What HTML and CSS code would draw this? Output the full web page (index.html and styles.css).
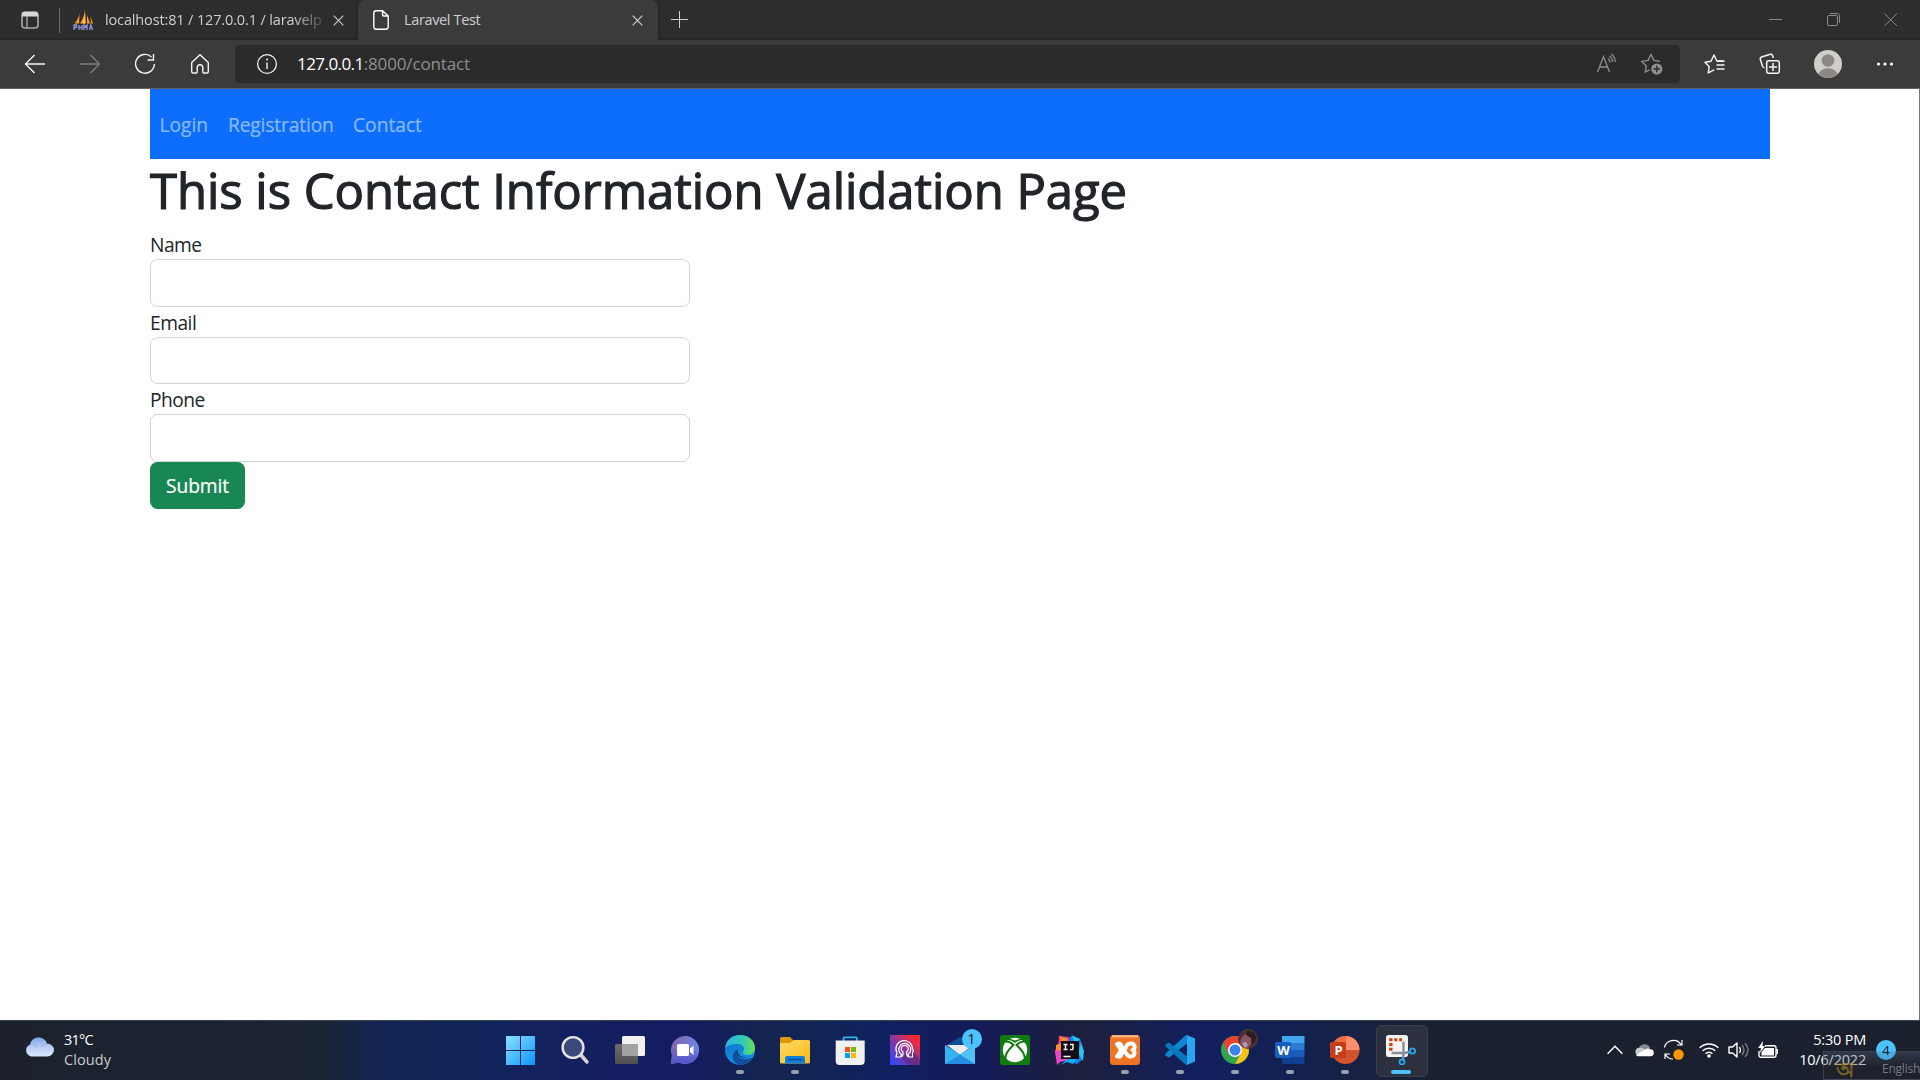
FILE: index.html
```html
<!DOCTYPE html>
<html lang="en">
<head>
<meta charset="utf-8">
<title>Laravel Test</title>
<link rel="stylesheet" href="styles.css">
</head>
<body>
<div class="screen">
  <header class="tabstrip">
    <button class="tab-actions" aria-label="Tab actions"><svg width="18" height="18" viewBox="0 0 18 18"><rect x="1" y="1" width="16" height="16" rx="3" fill="none" stroke="#a9a9a9" stroke-width="1.6"/><path d="M1 5V4a3 3 0 0 1 3-3h10a3 3 0 0 1 3 3v1.500H1z" fill="#d8d8d8"/><path d="M6 5v12" stroke="#a9a9a9" stroke-width="1.4"/></svg></button>
    <span class="divider"></span>
    <div class="tab tab-idle">
      <svg width="21" height="21" viewBox="0 0 21 21"><path d="M1.500 13.500C4 11 6 7 6.500 3l-.3 10.500zM7 13.500C9.500 10 11.500 5 12 0l1 13.500zM14 13.500V5l3 8.500zM17.500 6.500l2.500 7h-2z" fill="#f89c1c"/><path d="M11.500 2l.5 11.500H9.500C11 10 11.500 6 11.500 2z" fill="#ffc46a"/><path d="M1 20v-5h2.500v2.500H1M6 20v-5m0 2.500h3M9 15v5M11 20v-5l1.500 2 1.500-2v5M16.500 20l1.300-5 1.700 5" fill="none" stroke="#8f95cf" stroke-width="1.400"/></svg>
      <span class="tab-title fade">localhost:81 / 127.0.0.1 / laravelp</span>
      <svg class="x" width="11" height="11" viewBox="0 0 11 11"><path d="M.7.7l9.600 9.600M10.300.7L.7 10.300" stroke="#c9c9c9" stroke-width="1.200"/></svg>
    </div>
    <div class="tab tab-active">
      <svg width="16" height="20" viewBox="0 0 16 20"><path d="M3 .8h6.500L15.200 6v11a2.200 2.200 0 0 1-2.200 2.200H3A2.200 2.200 0 0 1 .8 17V3A2.200 2.200 0 0 1 3 .8zM9.500 1v3.500A1.500 1.500 0 0 0 11 6h4" fill="none" stroke="#fff" stroke-width="1.400"/></svg>
      <span class="tab-title">Laravel Test</span>
      <svg class="x" width="11" height="11" viewBox="0 0 11 11"><path d="M.7.7l9.600 9.600M10.300.7L.7 10.300" stroke="#d0d0d0" stroke-width="1.200"/></svg>
    </div>
    <button class="new-tab" aria-label="New tab"><svg width="17" height="17" viewBox="0 0 17 17"><path d="M8.500 0v17M0 8.500h17" stroke="#cfcfcf"/></svg></button>
    <div class="window-controls">
      <svg width="14" height="14" viewBox="0 0 14 14"><path d="M0 6.500h13" stroke="#8b8b8b"/></svg>
      <svg width="14" height="14" viewBox="0 0 14 14"><rect x=".5" y="2.500" width="10" height="10" rx="1.500" fill="none" stroke="#8b8b8b"/><path d="M3 .5h7A2.500 2.500 0 0 1 12.500 3v7" fill="none" stroke="#8b8b8b"/></svg>
      <svg width="14" height="14" viewBox="0 0 14 14"><path d="M.5.5l12.500 12.500M13 .5L.5 13" stroke="#8b8b8b"/></svg>
    </div>
  </header>

  <div class="toolbar">
    <div class="nav-buttons">
      <svg width="22" height="22" viewBox="0 0 22 22"><path d="M21 11H1.500M10.500 2L1.500 11l9 9" fill="none" stroke="#f5f5f5" stroke-width="1.400"/></svg>
      <svg width="22" height="22" viewBox="0 0 22 22"><path d="M1 11h19.500M11.500 2l9 9-9 9" fill="none" stroke="#7d7d7d" stroke-width="1.400"/></svg>
      <svg width="22" height="22" viewBox="0 0 22 22"><path d="M17.500 4A9.400 9.400 0 1 0 20.400 11" fill="none" stroke="#f5f5f5" stroke-width="1.400"/><path d="M19.500 1v6h-6" fill="none" stroke="#f5f5f5" stroke-width="1.400"/></svg>
      <svg width="22" height="22" viewBox="0 0 22 22"><path d="M2.700 9.500L11 1.800l8.300 7.700v9.200a1.300 1.300 0 0 1-1.300 1.300h-3.200a1 1 0 0 1-1-1v-4.500a2.800 2.800 0 0 0-5.600 0V19a1 1 0 0 1-1 1H4a1.300 1.300 0 0 1-1.300-1.300z" fill="none" stroke="#f5f5f5" stroke-width="1.400" stroke-linejoin="round"/></svg>
    </div>
    <div class="address">
      <svg width="22" height="22" viewBox="0 0 22 22"><circle cx="11" cy="11" r="9.400" fill="none" stroke="#f2f2f2" stroke-width="1.300"/><path d="M11 9.500v6.500" stroke="#f2f2f2" stroke-width="1.400"/><circle cx="11" cy="6.500" r="1" fill="#f2f2f2"/></svg>
      <span class="url"><b>127.0.0.1</b><span>:8000/contact</span></span>
      <svg class="read" width="22" height="22" viewBox="0 0 22 22"><path d="M1.500 19L7.500 3.500 13.500 19M3.600 14h7.800M12 5.500q2 1.500 2 4M13.500 3q3 2 3 6M15.300 1q4 3 4 8" fill="none" stroke="#8d8d8d" stroke-width="1.300"/></svg>
      <svg width="24" height="24" viewBox="0 0 24 24"><path d="M20 9.400l-6.100-1L11 2.500 8.100 8.400l-6.300 1 4.500 4.500L5.300 20l4.500-2.300" fill="none" stroke="#8d8d8d" stroke-width="1.400"/><circle cx="16.800" cy="17" r="5.600" fill="#8f8f8f"/><path d="M16.800 13.800v6.400M13.600 17H20" stroke="#2b2b2b" stroke-width="1.400"/></svg>
    </div>
    <div class="toolbar-actions">
      <svg width="24" height="22" viewBox="0 0 24 22"><path d="M20.500 8.300H14L11 2 8 8.300l-6 .9 4.300 4.500-1.100 6.200 6-3" fill="none" stroke="#f5f5f5" stroke-width="1.400" stroke-linejoin="round"/><path d="M13.500 12h8M13.500 16h8M14.500 8h7" stroke="#f5f5f5" stroke-width="1.500"/></svg>
      <svg width="24" height="22" viewBox="0 0 24 22"><rect x="8.700" y="7.700" width="12.600" height="12.600" rx="2" fill="none" stroke="#f5f5f5" stroke-width="1.500"/><path d="M15 10v8M11 14h8M15.300 5l-.8-2.600a1.700 1.700 0 0 0-2.100-1.100L3.500 4a2 2 0 0 0-1.200 2.300l2.200 7a2.500 2.500 0 0 0 2 1.500" fill="none" stroke="#f5f5f5" stroke-width="1.500"/></svg>
      <svg width="28" height="28" viewBox="0 0 28 28"><defs><clipPath id="face"><circle cx="14" cy="14" r="14"/></clipPath></defs><circle cx="14" cy="14" r="14" fill="#d0cecb"/><g clip-path="url(#face)" fill="#8d8884"><circle cx="14" cy="10.500" r="6.300"/><ellipse cx="14" cy="26" rx="10" ry="7.800"/></g></svg>
      <svg width="18" height="6" viewBox="0 0 18 6"><g fill="#fff"><circle cx="2.500" cy="3" r="1.600"/><circle cx="9" cy="3" r="1.600"/><circle cx="15.500" cy="3" r="1.600"/></g></svg>
    </div>
  </div>

  <main class="page">
    <div class="container">
      <nav class="navbar"><a class="n-login">Login</a><a class="n-reg">Registration</a><a class="n-contact">Contact</a></nav>
      <h1>This is Contact Information Validation Page</h1>
      <form>
        <label for="name">Name</label><input id="name" type="text">
        <label for="email">Email</label><input id="email" type="text">
        <label for="phone">Phone</label><input id="phone" type="text">
        <button class="submit" type="button">Submit</button>
      </form>
    </div>
  </main>

  <footer class="taskbar">
    <div class="weather">
      <svg width="32" height="22" viewBox="0 0 32 22"><defs><linearGradient id="cl" x2="0" y2="1"><stop stop-color="#7fa4e8"/><stop offset=".55" stop-color="#bcd0f5"/><stop offset="1" stop-color="#dbe9ff"/></linearGradient></defs><path d="M8 20.500A7 6.500 0 0 1 7 8.500C8 4 11.500 1.500 15.500 1.500S23 4 24 7.500a7 6.500 0 0 1 0 13z" fill="url(#cl)"/><path d="M7 8.500q5-1 7 3M24 7.500q-5 0-6 4" fill="none" stroke="#86a8e6" opacity=".6"/></svg>
      <div class="weather-text"><span class="temp">31°C</span><span class="cond">Cloudy</span></div>
    </div>

    <div class="apps">
      <div class="app"><svg viewBox="0 0 30 30"><defs><linearGradient id="w1" x2="1" y2="1"><stop stop-color="#8be3ff"/><stop offset="1" stop-color="#0a94fb"/></linearGradient></defs><path d="M1 1h14v14H1zM16 1h14v14H16zM1 16h14v14H1zM16 16h14v14H16z" fill="url(#w1)"/></svg></div>
      <div class="app"><svg viewBox="0 0 30 30"><path d="M20 19l7 8" stroke="#d5d5d5" stroke-width="3.500" stroke-linecap="round"/><circle cx="13" cy="12.500" r="10.400" fill="#3c497b" stroke="#e6e6e6" stroke-width="2.400"/></svg></div>
      <div class="app"><svg viewBox="0 0 30 30"><defs><linearGradient id="tv" y2="1" x2="0"><stop stop-color="#6e6e6e"/><stop offset="1" stop-color="#4f4f4f"/></linearGradient></defs><rect x="7" y="1" width="23" height="20" rx="1.500" fill="#f1f1f1"/><rect y="9" width="23" height="20" rx="1.500" fill="url(#tv)"/><path d="M7 9h14.500A1.500 1.500 0 0 1 23 10.500V21H7z" fill="#a3a3a3"/></svg></div>
      <div class="app"><svg viewBox="0 0 30 30"><defs><linearGradient id="ch" x2="1" y2=".3"><stop stop-color="#8860a3"/><stop offset="1" stop-color="#6a86ea"/></linearGradient><linearGradient id="ch2" x2="0" y2="1"><stop offset=".4" stop-color="#5558c8" stop-opacity="0"/><stop offset=".9" stop-color="#5558c8"/></linearGradient></defs><path d="M15 1a14 14 0 1 1-6 26.600L.8 29 2 20.500A14 14 0 0 1 15 1z" fill="url(#ch)"/><path d="M15 1a14 14 0 1 1-6 26.600L.8 29 2 20.500A14 14 0 0 1 15 1z" fill="url(#ch2)"/><rect x="7" y="9" width="12" height="12" rx="1.500" fill="#fff"/><path d="M20 13.500l3.500-3v9.500L20 17z" fill="#fff"/></svg></div>
      <div class="app run"><svg viewBox="0 0 30 30"><defs><linearGradient id="e1"><stop stop-color="#2db5e5"/><stop offset=".6" stop-color="#35c9b5"/><stop offset="1" stop-color="#6be04e"/></linearGradient><linearGradient id="e2" x2=".4" y2="1"><stop stop-color="#0e6fc8"/><stop offset="1" stop-color="#1592e6"/></linearGradient></defs><circle cx="15" cy="15" r="15" fill="url(#e2)"/><path d="M0 13C1 5 7 0 15 0c9 0 15 6 15 13 0 4-3 7-7 7-3 0-5.500-1-5.500-2.200 0-.8 1.500-1.300 1.500-3.800 0-3-3-5-7-5-5 0-9.500 1.500-12 4z" fill="url(#e1)"/><path d="M12.500 15c-2 7 4 12 15 7.500-3 5-7.500 7.500-12 7.500C9 29 7 24 8 19.500c.5-2.500 2.500-4 4.500-4.500z" fill="#11509c"/><path d="M13 14c-1 3 0 6 3 7.500 3 1.200 7 1 10-.5-6 3-12 2-14-2-1-2-.3-4 1-5z" fill="#10295f"/></svg></div>
      <div class="app run"><svg viewBox="0 0 30 30"><defs><linearGradient id="fo" x2="1" y2="1"><stop stop-color="#ffdb6b"/><stop offset="1" stop-color="#fcb813"/></linearGradient></defs><path d="M0 3.500A1.500 1.500 0 0 1 1.500 2H10l3.500 3.500H28A2 2 0 0 1 30 7.500V10H0z" fill="#dc9600"/><path d="M0 8h10l4-3h14.500A1.500 1.500 0 0 1 30 6.500V27a1.500 1.500 0 0 1-1.500 1.500h-27A1.500 1.500 0 0 1 0 27z" fill="url(#fo)"/><path d="M5 28.500V23a2 2 0 0 1 2-2h16a2 2 0 0 1 2 2v5.500z" fill="#1280d8"/><path d="M8 24.500h14" stroke="#0a4d94" stroke-width="1.500"/></svg></div>
      <div class="app"><svg viewBox="0 0 30 30"><path d="M8.500 8V3.500a1.200 1.200 0 0 1 1.200-1.200h11a1.200 1.200 0 0 1 1.200 1.200V8" fill="none" stroke="#31b4ec" stroke-width="1.800"/><path d="M.7 5.500h29V26a4 4 0 0 1-4 4H4.700a4 4 0 0 1-4-4z" fill="#f0f0f0"/><path d="M10 12h5v5h-5z" fill="#f05022"/><path d="M16 12h5v5h-5z" fill="#7db700"/><path d="M10 18h5v5h-5z" fill="#00a3ee"/><path d="M16 18h5v5h-5z" fill="#fdb800"/></svg></div>
      <div class="app"><svg viewBox="0 0 30 30"><defs><linearGradient id="pa" y1="1" x2="1" y2="0"><stop stop-color="#2c48ff"/><stop offset=".5" stop-color="#8a359c"/><stop offset=".85" stop-color="#fb2730"/></linearGradient></defs><path d="M0 0h30v30H0z" fill="url(#pa)"/><path d="M10 22l9 8h11V24l-8-9z" fill="#561d69" opacity=".5"/><path d="M6 22h4.500l1-2.500a6 6 0 1 1 6.500 0l1 2.500h3.500v-4.500l1-1.500-1-2.500A8.300 8.300 0 1 0 7 18z" fill="none" stroke="#fff" stroke-width="1.200"/><path d="M11.500 22c2-1 1.500-4 1.500-5a3.500 3.500 0 1 1 3.500 0c0 1 0 4 2 5" fill="none" stroke="#fff" stroke-width="1.200"/></svg></div>
      <div class="app"><svg viewBox="0 0 30 30"><path d="M0 11L15 2l15 9z" fill="#0f4f98"/><path d="M0 10h30v10H0z" fill="#0f4f98"/><path d="M2 10h26L15 20z" fill="#ececec"/><path d="M0 10l15 9.500L30 10v19H0z" fill="#35b3ee"/><path d="M0 29l30-19v19z" fill="#51c4f3"/><path d="M0 29l15-9.500L30 29z" fill="#258ee0"/></svg><span class="badge">1</span></div>
      <div class="app"><svg viewBox="0 0 30 30"><rect width="30" height="30" rx="2.500" fill="#107c10"/><circle cx="15" cy="15" r="12.200" fill="#fff"/><path d="M6 5.500Q10 4 15 8q5-4 9-2.500L22 3 15 5.500 8 3z" fill="#107c10"/><path d="M5.200 6.700C9 6 12.500 9 13.500 10 9 14 5 19.500 5.300 24M24.800 6.700C21 6 17.500 9 16.500 10c4.500 4 8.500 9.500 8.200 14" fill="none" stroke="#107c10" stroke-width="2"/></svg></div>
      <div class="app"><svg viewBox="0 0 30 30"><path d="M4 1l10 1 1 12L1 22l-1-7 3-3z" fill="#ef3b7e"/><path d="M1 10l5-2v12l-5-1zM4 1l9 3-5 6z" fill="#fa8d2c"/><path d="M14 3l3-2.500L25 4l2 5v16l-5 4-10-3z" fill="#1d78ec"/><path d="M17 .5L25 4l-5 5zM26 8l3 8-1 10-5-8z" fill="#21c7ee"/><path d="M0 16l6-1 8 10-9 2-3 3z" fill="#e947c6"/><path d="M5 30l8-6 10-1-5 6-6-2z" fill="#0dabef"/><path d="M6 6h18v18H6z" fill="#130d16"/><path d="M8.500 9.500h4m-2 0v5m-2 0h4M15 9.500h3v4q0 1.500-3 1M8.500 21.500h7" fill="none" stroke="#fff" stroke-width="1.400"/></svg></div>
      <div class="app run"><svg viewBox="0 0 30 30"><rect width="30" height="30" rx="3.500" fill="#ed7426"/><path d="M2 0h26v2.500H2z" fill="#ffb078"/><path d="M7 9.200q2-1.200 3.500 0l1.500 3.300q1 1.500 3 1.500l2-4q1-1.500 4-1.500c4.500 0 4.500 6 1.500 6.500 3 .8 2.500 6.500-1.500 6.500q-3 0-4-2l-2-3q-2 0-3 1.500L10.500 21Q9 22 7 21.300" fill="none" stroke="#fff" stroke-width="4" stroke-linecap="round" stroke-linejoin="round"/><path d="M8 10l3 5-3 5.500" fill="none" stroke="#fff" stroke-width="4"/></svg></div>
      <div class="app run"><svg viewBox="0 0 30 30"><path d="M22 0l8 3.500v23L22 30z" fill="#2aa5f4"/><path d="M22 0v8.500L4 22.500.3 20.500v-1.800L20.500.5z" fill="#1285d2"/><path d="M22 30v-8.500L4 7.500.3 9.500v1.800L20.500 29.500z" fill="#0878bd"/></svg></div>
      <div class="app run"><svg viewBox="0 0 30 30"><circle cx="15" cy="15" r="14" fill="#34a350"/><path d="M15 15L2.900 8A14 14 0 0 1 27.100 8H15z" fill="#ea4335"/><path d="M15 8h12.100A14 14 0 0 1 15 29l6-10.500z" fill="#fbc116"/><path d="M3 8l6 10.500L15 15z" fill="#ea4335"/><circle cx="15" cy="15" r="7" fill="#fff"/><circle cx="15" cy="15" r="5.500" fill="#3b82ee"/></svg><svg class="profile" viewBox="0 0 20 20"><circle cx="10" cy="10" r="10" fill="#4d3236"/><path d="M2 15q1-8 6-10 5 0 6 4l-1 7-4 3.500Q4 19 2 15z" fill="#8c5460"/><path d="M4 14l4-1 2 3-3 3z" fill="#b79abb"/><path d="M9 2q9-1 9 8l-4 7-1-8-5-3z" fill="#2b1d22"/></svg></div>
      <div class="app run"><svg viewBox="0 0 30 30"><path d="M7 1h22.500v7H7z" fill="#41a5ee"/><path d="M7 8h22.500v7H7z" fill="#2b7cd3"/><path d="M7 15h22.500v7H7z" fill="#185abd"/><path d="M7 22h22.500v7H7z" fill="#103f91"/><rect y="7" width="16" height="16" rx="1.500" fill="#1a5dbe"/></svg><span class="mono">W</span></div>
      <div class="app run"><svg viewBox="0 0 30 30"><circle cx="15.500" cy="15" r="14" fill="#d35230"/><path d="M15.500 1a14 14 0 0 1 14 14h-14z" fill="#ff8f6b"/><path d="M15.500 1v14h-14a14 14 0 0 1 14-14z" fill="#ed6c47"/><rect y="7" width="16" height="16" rx="1.500" fill="#c43e1c"/></svg><span class="mono">P</span></div>
      <div class="app run active"><svg viewBox="0 0 30 30"><rect width="22" height="22" rx="2.500" fill="#f4f4f4"/><path d="M3.200 3.200h3.300v3H3.200zM8.300 3.200h3v3h-3zM13.200 3.200H16v3h-2.800zM3.200 8h3.300v3H3.200zM3.200 12.800h3.300v3H3.200z" fill="#d83b01"/><path d="M5 18h4M17.500 6v5" stroke="#c4c4c4" stroke-width="2"/><path d="M17.500 7v13l-1 3M6 18h13l4-1" fill="none" stroke="#8b9197" stroke-width="2.400"/><circle cx="16" cy="27" r="2.500" fill="none" stroke="#28a8ea" stroke-width="1.800"/><circle cx="26.500" cy="16" r="2.700" fill="none" stroke="#28a8ea" stroke-width="1.800"/><path d="M17 24.500l1-2.500M24 17l-2.500.7" stroke="#28a8ea" stroke-width="2"/></svg></div>
    </div>

    <div class="tray">
      <svg width="16" height="10" viewBox="0 0 16 10"><path d="M.6 8.800L8 1.200l7.400 7.600" fill="none" stroke="#fff" stroke-width="1.400"/></svg>
      <svg class="t-cloud" width="20" height="14" viewBox="0 0 20 14"><path d="M5 5A6 5.500 0 0 1 15.500 3.500l.5 2L9 9z" fill="#858b93"/><path d="M4 12.500A4 4 0 0 1 5 4.800q4-1 8 4z" fill="#c9cbcf"/><path d="M2 12l10-6q2-1 4 .2a3.500 3.500 0 0 1 .5 7H4q-1.500 0-2-1.200z" fill="#fff"/></svg>
      <svg class="t-sync" width="22" height="22" viewBox="0 0 22 22"><path d="M1.500 8.500A9 8.500 0 0 1 18 5.500M19 1v5h-5M2 20v-5h5M2.500 15.500Q5 20 10 20" fill="none" stroke="#fff" stroke-width="1.200"/><circle cx="15.500" cy="15.500" r="5.200" fill="#ff9800"/></svg>
      <svg class="t-wifi" width="20" height="16" viewBox="0 0 20 16"><path d="M.7 5.800a13.200 13.200 0 0 1 18.600 0M3.700 8.800a9 9 0 0 1 12.600 0M6.600 11.700a4.800 4.800 0 0 1 6.800 0" fill="none" stroke="#fff" stroke-width="1.500"/><circle cx="10" cy="14" r="1.800" fill="#fff"/></svg>
      <svg class="t-vol" width="21" height="18" viewBox="0 0 21 18"><path d="M1 6h3.500L9 2v14l-4.500-4H1z" fill="none" stroke="#fff" stroke-width="1.400" stroke-linejoin="round"/><path d="M11.500 6q2 3 0 6" fill="none" stroke="#fff" stroke-width="1.300"/><path d="M14 4q4 5 0 10M17 2q6 7 0 14" fill="none" stroke="#777c85" stroke-width="1.300"/></svg>
      <svg class="t-bat" width="21" height="18" viewBox="0 0 21 18"><path d="M7 4.700h9a2 2 0 0 1 2 2v7.600a2 2 0 0 1-2 2H3a2 2 0 0 1-2-2V10" fill="none" stroke="#fff" stroke-width="1.400"/><path d="M7 7h9v7.500H3.500V11zM18.500 8H20v5h-1.500z" fill="#fff"/><path d="M5 0L0 7h3l-1 5 5-7H4.500z" fill="#fff"/></svg>
      <div class="clock"><span class="time">5:30 PM</span><span class="date">10/6/2022</span></div>
      <span class="count">4</span>
    </div>
    <div class="ime"><span class="ime-logo">অ</span><span class="ime-name">English</span></div>
  </footer>
</div>
</body>
</html>
```

FILE: styles.css
```css
* { box-sizing: border-box; }

body {
  margin: 0;
  font-family: "Open Sans", "Noto Sans", sans-serif;
  background: #fff;
}

.screen {
  width: 1920px;
  height: 1080px;
  display: flex;
  flex-direction: column;
  overflow: hidden;
}

svg { display: block; flex: none; }
button { border: 0; padding: 0; background: none; font: inherit; }

/* Browser tab strip */
.tabstrip {
  height: 40px;
  flex: none;
  display: flex;
  background: #2d2d2d;
  box-shadow: inset 0 -2px 2px -1px #222;
  color: #cfcfcf;
  font-size: 14.500px;
}
.tab-actions { width: 39px; padding-left: 21px; }
.divider { width: 1px; height: 25px; margin: 8px 13px 0 20px; background: #6b6b6b; }
.tab { display: flex; align-items: center; }
.tab-idle { width: 285px; }
.tab-title { white-space: nowrap; line-height: 20px; letter-spacing: -.36px; }
.tab-idle .tab-title { width: 217px; margin: 0 11px; letter-spacing: -.14px; }
.fade { -webkit-mask-image: linear-gradient(90deg, #000 188px, transparent 224px); }
.tab-active {
  width: 300px;
  padding: 0 15px 0 15px;
  background: #3b3b3b;
  border-radius: 6px 6px 0 0;
  box-shadow: 0 0 3px #1c1c1c;
}
.tab-active .tab-title { margin-left: 15px; }
.tab-active .x { margin-left: auto; }
.new-tab { width: 17px; height: 38px; margin-left: 13px; }
.window-controls { display: flex; gap: 43.500px; margin: 13px 22px 0 auto; }

/* Browser toolbar */
.toolbar {
  height: 49px;
  flex: none;
  display: flex;
  align-items: center;
  background: #3b3b3b;
  border-bottom: 1px solid #636363;
  position: relative;
}
.nav-buttons { display: flex; gap: 33px; padding-left: 24px; width: 235px; }
.address {
  width: 1445px;
  height: 38px;
  display: flex;
  align-items: center;
  padding: 0 16px 0 21px;
  border-radius: 5px;
  background: #2b2b2b;
}
.url { margin-left: 19px; font-size: 17px; color: #8f8f8f; letter-spacing: -.14px; line-height: 22px; }
.url b { font-weight: 400; color: #fff; letter-spacing: -.56px; }
.read { margin: 0 22px 0 auto; }
.toolbar-actions { display: flex; align-items: center; padding-left: 23px; }
.toolbar-actions svg:nth-child(2) { margin-left: 31px; }
.toolbar-actions svg:nth-child(3) { margin-left: 32px; }
.toolbar-actions svg:nth-child(4) { margin-left: 34px; }

/* Web page */
.page { flex: 1; background: #fff; border-right: 1px solid #777; }
.container { width: 1620px; margin-left: 150px; color: #212529; }
.navbar {
  height: 70px;
  display: flex;
  align-items: center;
  background: #0d6efd;
  color: #8abaff;
  font-size: 19.200px;
  -webkit-text-stroke: .2px currentColor;
}
.navbar a { padding: 0 9.500px; }
.n-login { width: 68.500px; }
.n-reg { width: 125px; letter-spacing: -.14px; }
h1 {
  margin: 0;
  height: 70px;
  padding-top: 1px;
  font-size: 49px;
  font-weight: 500;
  line-height: 61px;
  letter-spacing: -.03px;
  white-space: nowrap;
  -webkit-text-stroke: 1.200px currentColor;
}
form { width: 539.500px; display: flex; flex-direction: column; align-items: flex-start; }
label { height: 30px; line-height: 32px; font-size: 19.200px; letter-spacing: -.5px; }
input {
  width: 539.500px;
  height: 47.500px;
  border: 1px solid #ced4da;
  border-radius: 7.500px;
  background: #fff;
}
.submit {
  width: 95px;
  height: 47.500px;
  border-radius: 7.500px;
  background: #198754;
  color: #fff;
  font-size: 19.200px;
  letter-spacing: -.1px;
  -webkit-text-stroke: .2px currentColor;
}

/* Desktop taskbar */
.taskbar {
  height: 60px;
  flex: none;
  display: flex;
  position: relative;
  border-top: 1px solid #3a4553;
  background: linear-gradient(90deg, #1c212d 0, #1b2431 320px, #12244f 375px, #12235a 480px, #141c62 680px, #13254f 770px, #102060 890px, #141b57 980px, #1c1f3c 1080px, #111f5f 1200px, #13214f 1300px, #1b2030 1440px, #1a202c 1920px);
  color: #fff;
  font-size: 14.500px;
}
.weather { display: flex; width: 492px; padding-left: 23px; }
.weather svg { margin-top: 15px; }
.weather-text { display: flex; flex-direction: column; margin: 9px 0 0 9px; line-height: 20px; }
.temp { letter-spacing: -.8px; }
.cond { color: #c9cbce; letter-spacing: .1px; }
.apps { display: flex; }
.app { position: relative; width: 55.070px; display: flex; justify-content: center; padding-top: 14px; }
.app > svg { width: 30px; height: 30px; }
.run::after {
  content: "";
  position: absolute;
  left: 50%;
  top: 49px;
  width: 8px;
  height: 4px;
  margin-left: -4px;
  border-radius: 2px;
  background: #9a9fae;
}
.active::before {
  content: "";
  position: absolute;
  left: 2.500px;
  top: 4px;
  width: 50px;
  height: 50px;
  border: 1px solid #393e4c;
  border-radius: 5px;
  background: #2c303f;
}
.active > svg { position: relative; }
.active::after { width: 20px; margin-left: -10px; background: #4cc2ff; }
.badge {
  position: absolute;
  left: 29px;
  top: 8px;
  width: 20px;
  height: 20px;
  border-radius: 50%;
  background: #4cc2ff;
  color: #10212e;
  text-align: center;
  line-height: 20px;
}
.app > .profile { position: absolute; left: 30px; top: 8px; width: 20px; height: 20px; }
.mono { position: absolute; left: 12.500px; top: 21px; width: 16px; text-align: center; font-size: 13px; font-weight: 700; line-height: 16px; letter-spacing: -.5px; }

.tray { display: flex; align-items: center; margin-left: auto; padding-right: 24px; height: 58px; }
.t-cloud { margin-left: 11px; }
.t-sync { margin-left: 9px; }
.t-wifi { margin-left: 14px; }
.t-vol { margin-left: 9px; }
.t-bat { margin-left: 9px; }
.clock { display: flex; flex-direction: column; align-items: flex-end; width: 87px; line-height: 20px; letter-spacing: -.2px; }
.count {
  position: relative;
  z-index: 1;
  width: 20px;
  height: 20px;
  margin-left: 10px;
  border-radius: 50%;
  background: linear-gradient(#4cc2ff 55%, #48a9de 60%);
  color: #10212e;
  font-size: 13px;
  line-height: 20px;
  text-align: center;
}
.ime {
  position: absolute;
  left: 1823px;
  top: 30px;
  width: 97px;
  height: 29px;
  display: flex;
  overflow: hidden;
  border: 1px solid rgba(85, 90, 102, .5);
  border-right: 0;
  background: linear-gradient(rgba(80, 92, 120, .4), rgba(35, 38, 45, .3) 60%);
}
.ime-logo { width: 60px; padding-left: 12px; color: rgba(176, 134, 30, .65); font-size: 21px; font-weight: 700; line-height: 34px; }
.ime-name { font-size: 12px; line-height: 33px; color: #777b82; letter-spacing: -.25px; white-space: nowrap; }
```
